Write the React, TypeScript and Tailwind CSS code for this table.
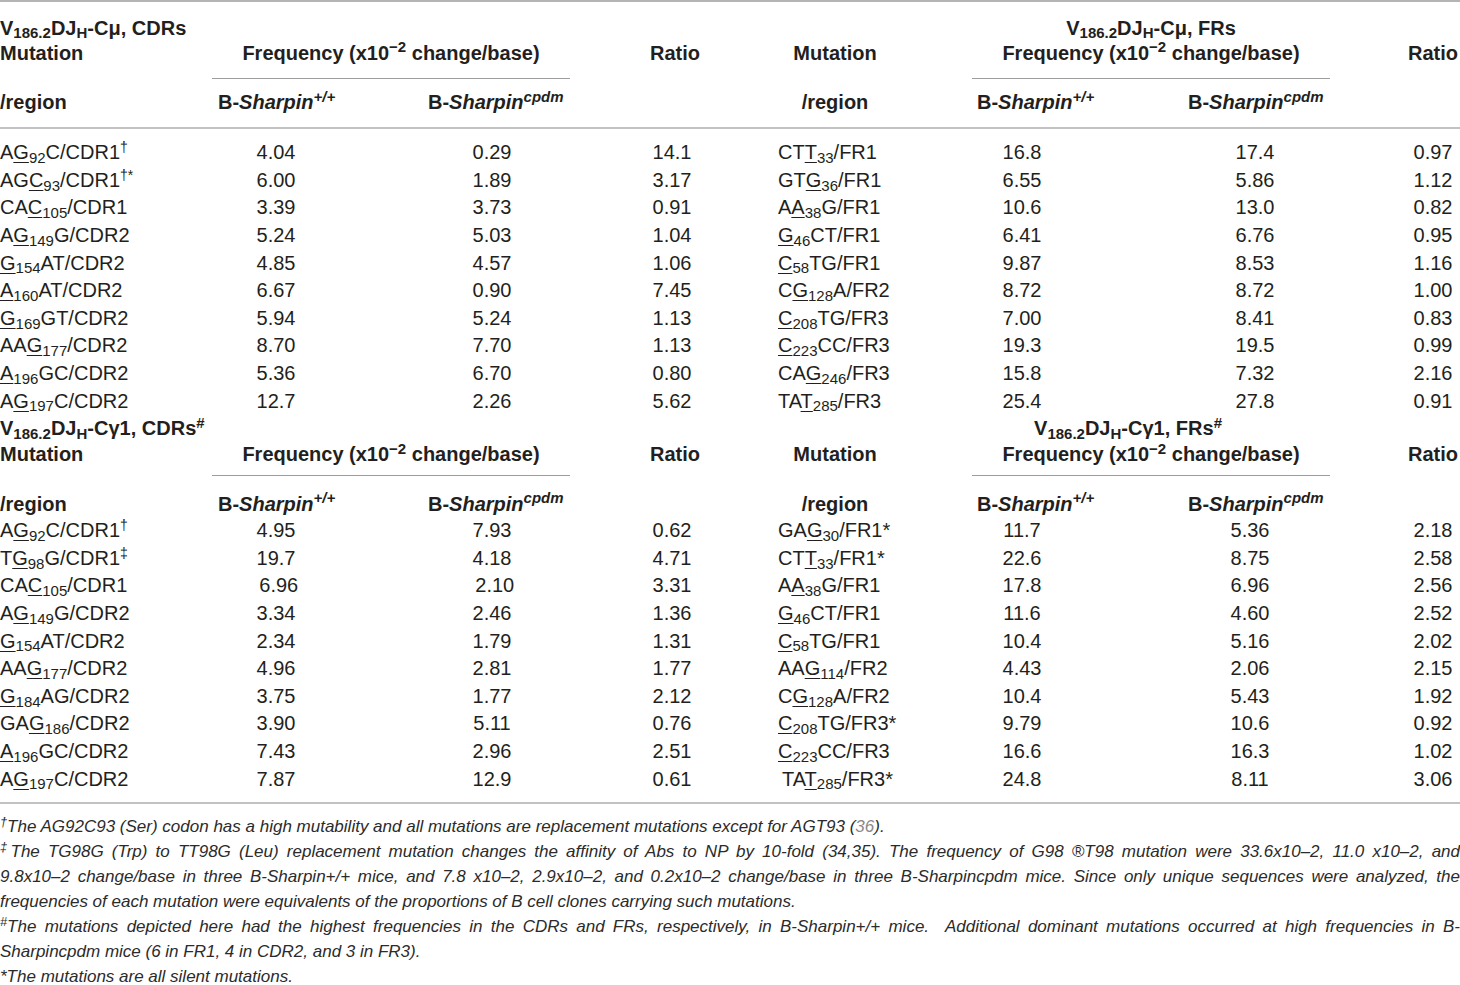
import type { ReactNode } from 'react'

type Mut = [string, string, string, string, string?]

interface Row {
  l: Mut
  a: string
  b: string
  r: string
  rm: Mut
  c: string
  d: string
  s: string
  indent?: boolean
}

const cdrMu: Row[] = [
  { l: ['A', 'G', '92', 'C/CDR1', '†'], a: '4.04', b: '0.29', r: '14.1', rm: ['CT', 'T', '33', '/FR1'], c: '16.8', d: '17.4', s: '0.97' },
  { l: ['AG', 'C', '93', '/CDR1', '†*'], a: '6.00', b: '1.89', r: '3.17', rm: ['GT', 'G', '36', '/FR1'], c: '6.55', d: '5.86', s: '1.12' },
  { l: ['CA', 'C', '105', '/CDR1'], a: '3.39', b: '3.73', r: '0.91', rm: ['A', 'A', '38', 'G/FR1'], c: '10.6', d: '13.0', s: '0.82' },
  { l: ['A', 'G', '149', 'G/CDR2'], a: '5.24', b: '5.03', r: '1.04', rm: ['', 'G', '46', 'CT/FR1'], c: '6.41', d: '6.76', s: '0.95' },
  { l: ['', 'G', '154', 'AT/CDR2'], a: '4.85', b: '4.57', r: '1.06', rm: ['', 'C', '58', 'TG/FR1'], c: '9.87', d: '8.53', s: '1.16' },
  { l: ['', 'A', '160', 'AT/CDR2'], a: '6.67', b: '0.90', r: '7.45', rm: ['C', 'G', '128', 'A/FR2'], c: '8.72', d: '8.72', s: '1.00' },
  { l: ['', 'G', '169', 'GT/CDR2'], a: '5.94', b: '5.24', r: '1.13', rm: ['', 'C', '208', 'TG/FR3'], c: '7.00', d: '8.41', s: '0.83' },
  { l: ['AA', 'G', '177', '/CDR2'], a: '8.70', b: '7.70', r: '1.13', rm: ['', 'C', '223', 'CC/FR3'], c: '19.3', d: '19.5', s: '0.99' },
  { l: ['', 'A', '196', 'GC/CDR2'], a: '5.36', b: '6.70', r: '0.80', rm: ['CA', 'G', '246', '/FR3'], c: '15.8', d: '7.32', s: '2.16' },
  { l: ['A', 'G', '197', 'C/CDR2'], a: '12.7', b: '2.26', r: '5.62', rm: ['TA', 'T', '285', '/FR3'], c: '25.4', d: '27.8', s: '0.91' },
]

const cdrG1: Row[] = [
  { l: ['A', 'G', '92', 'C/CDR1', '†'], a: '4.95', b: '7.93', r: '0.62', rm: ['GA', 'G', '30', '/FR1*'], c: '11.7', d: '5.36', s: '2.18' },
  { l: ['T', 'G', '98', 'G/CDR1', '‡'], a: '19.7', b: '4.18', r: '4.71', rm: ['CT', 'T', '33', '/FR1*'], c: '22.6', d: '8.75', s: '2.58' },
  { l: ['CA', 'C', '105', '/CDR1'], a: '\u00a06.96', b: '\u00a02.10', r: '3.31', rm: ['A', 'A', '38', 'G/FR1'], c: '17.8', d: '6.96', s: '2.56' },
  { l: ['A', 'G', '149', 'G/CDR2'], a: '3.34', b: '2.46', r: '1.36', rm: ['', 'G', '46', 'CT/FR1'], c: '11.6', d: '4.60', s: '2.52' },
  { l: ['', 'G', '154', 'AT/CDR2'], a: '2.34', b: '1.79', r: '1.31', rm: ['', 'C', '58', 'TG/FR1'], c: '10.4', d: '5.16', s: '2.02' },
  { l: ['AA', 'G', '177', '/CDR2'], a: '4.96', b: '2.81', r: '1.77', rm: ['AA', 'G', '114', '/FR2'], c: '4.43', d: '2.06', s: '2.15' },
  { l: ['', 'G', '184', 'AG/CDR2'], a: '3.75', b: '1.77', r: '2.12', rm: ['C', 'G', '128', 'A/FR2'], c: '10.4', d: '5.43', s: '1.92' },
  { l: ['GA', 'G', '186', '/CDR2'], a: '3.90', b: '5.11', r: '0.76', rm: ['', 'C', '208', 'TG/FR3*'], c: '9.79', d: '10.6', s: '0.92' },
  { l: ['', 'A', '196', 'GC/CDR2'], a: '7.43', b: '2.96', r: '2.51', rm: ['', 'C', '223', 'CC/FR3'], c: '16.6', d: '16.3', s: '1.02' },
  { l: ['A', 'G', '197', 'C/CDR2'], a: '7.87', b: '12.9', r: '0.61', rm: ['TA', 'T', '285', '/FR3*'], c: '24.8', d: '8.11', s: '3.06', indent: true },
]

function MutName({ m }: { m: Mut }) {
  const [pre, u, sub, post, mark] = m
  return (
    <span className="whitespace-nowrap">
      {pre}
      <span className="underline decoration-1 underline-offset-[3px]">{u}</span>
      <sub>{sub}</sub>
      {post}
      {mark && <sup className="text-[14px]">{mark}</sup>}
    </span>
  )
}

function Sharpin({ sup }: { sup: string }) {
  return (
    <span className="whitespace-nowrap">
      B-<i>Sharpin</i>
      <sup className="italic">{sup}</sup>
    </span>
  )
}

const Freq = () => (
  <span className="whitespace-nowrap">
    Frequency (x10<sup>−2</sup> change/base)
  </span>
)

function Title({ chain, part, mark }: { chain: ReactNode; part: string; mark?: boolean }) {
  return (
    <span className="whitespace-nowrap">
      V<sub>186.2</sub>DJ<sub>H</sub>-C{chain}, {part}
      {mark && <sup>#</sup>}
    </span>
  )
}

function DataRows({ rows, cpdmPad }: { rows: Row[]; cpdmPad: string }) {
  return (
    <>
      {rows.map((row, i) => (
        <tr key={i} className="h-[27.6px]">
          <td className="text-left">
            <MutName m={row.l} />
          </td>
          <td className="pr-[51px] text-center">{row.a}</td>
          <td className="pl-[23px] text-center">{row.b}</td>
          <td className="pl-[2px] text-center">{row.r}</td>
          <td className={`${row.indent ? 'pl-[10px]' : 'pl-[6px]'} text-left`}>
            <MutName m={row.rm} />
          </td>
          <td className="pr-[79px] text-center">{row.c}</td>
          <td className={`${cpdmPad} text-center`}>{row.d}</td>
          <td className="pl-[76px] text-center">{row.s}</td>
        </tr>
      ))}
    </>
  )
}

function Header({ left, right, second }: { left: ReactNode; right: ReactNode; second?: boolean }) {
  const low = second ? 'align-bottom' : 'align-middle'
  return (
    <>
      <tr className={second ? 'h-[27.5px]' : 'h-[38.5px]'}>
        <td colSpan={4} className={`${second ? 'align-middle' : 'align-bottom'} text-left font-bold`}>
          {left}
        </td>
        <td />
        <td colSpan={2} className={`${second ? 'align-middle pr-[46px]' : 'align-bottom'} text-center font-bold`}>
          {right}
        </td>
        <td />
      </tr>
      <tr className={second ? 'h-[33.5px]' : 'h-[37.5px]'}>
        <td className="align-top font-bold">Mutation</td>
        <td colSpan={2} className="border-b border-[#9d9d9d] text-center align-top font-bold">
          <Freq />
        </td>
        <td className="pl-[80px] text-left align-top font-bold">Ratio</td>
        <td className="pr-[74px] text-center align-top font-bold">Mutation</td>
        <td colSpan={2} className="border-b border-[#9d9d9d] text-center align-top font-bold">
          <Freq />
        </td>
        <td className="pl-[78px] text-left align-top font-bold">Ratio</td>
      </tr>
      <tr className={second ? 'h-[41px]' : 'h-[50px]'}>
        <td className={`font-bold ${low}`}>/region</td>
        <td className={`pl-[6px] font-bold ${low}`}>
          <Sharpin sup="+/+" />
        </td>
        <td className={`pl-[37px] font-bold ${low}`}>
          <Sharpin sup="cpdm" />
        </td>
        <td />
        <td className={`pr-[74px] text-center font-bold ${low}`}>/region</td>
        <td className={`pl-[5px] font-bold ${low}`}>
          <Sharpin sup="+/+" />
        </td>
        <td className={`pl-[37px] font-bold ${low}`}>
          <Sharpin sup="cpdm" />
        </td>
        <td />
      </tr>
    </>
  )
}

export default function App() {
  return (
    <div className="w-[1460px] h-[985px] overflow-hidden bg-white text-[#231f20] font-['Liberation_Sans',Arial,sans-serif]">
      <div className="border-t-2 border-[#b4b4b4]">
        <table className="w-[1460px] table-fixed border-collapse text-[20px] leading-[25px]">
          <colgroup>
            <col className="w-[212px]" />
            <col className="w-[179px]" />
            <col className="w-[179px]" />
            <col className="w-[202px]" />
            <col className="w-[200px]" />
            <col className="w-[179px]" />
            <col className="w-[179px]" />
            <col className="w-[130px]" />
          </colgroup>
          <tbody>
            <Header
              left={<Title chain="μ" part="CDRs" />}
              right={<Title chain="μ" part="FRs" />}
            />
            <tr className="h-[11px] border-t-2 border-[#c2c2c2]">
              <td colSpan={8} />
            </tr>
            <DataRows rows={cdrMu} cpdmPad="pl-[29px]" />
            <Header
              second
              left={<Title chain="γ1" part="CDRs" mark />}
              right={<Title chain="γ1" part="FRs" mark />}
            />
            <DataRows rows={cdrG1} cpdmPad="pl-[19px]" />
            <tr className="h-[9px]">
              <td colSpan={8} />
            </tr>
          </tbody>
        </table>
      </div>

      {/* footnotes */}
      <div className="border-t-2 border-[#c2c2c2] pt-[10px] text-[17px] leading-[25px] italic text-[#2b2b2b]">
        <div className="whitespace-nowrap">
          <sup>†</sup>The AG92C93 (Ser) codon has a high mutability and all mutations are replacement mutations except for AGT93 (<span className="text-[#8a8a8a]">36</span>).
        </div>
        <div className="whitespace-nowrap text-justify [text-align-last:justify]">
          <sup>‡</sup>The TG98G (Trp) to TT98G (Leu) replacement mutation changes the affinity of Abs to NP by 10-fold (34,35). The frequency of G98 ®T98 mutation were 33.6x10–2, 11.0 x10–2, and
        </div>
        <div className="whitespace-nowrap text-justify [text-align-last:justify]">
          9.8x10–2 change/base in three B-Sharpin+/+ mice, and 7.8 x10–2, 2.9x10–2, and 0.2x10–2 change/base in three B-Sharpincpdm mice. Since only unique sequences were analyzed, the
        </div>
        <div className="whitespace-nowrap">
          frequencies of each mutation were equivalents of the proportions of B cell clones carrying such mutations.
        </div>
        <div className="whitespace-nowrap text-justify [text-align-last:justify]">
          <sup>#</sup>The mutations depicted here had the highest frequencies in the CDRs and FRs, respectively, in B-Sharpin+/+ mice.&nbsp; Additional dominant mutations occurred at high frequencies in B-
        </div>
        <div className="whitespace-nowrap">Sharpincpdm mice (6 in FR1, 4 in CDR2, and 3 in FR3).</div>
        <div className="whitespace-nowrap">*The mutations are all silent mutations.</div>
      </div>
    </div>
  )
}
